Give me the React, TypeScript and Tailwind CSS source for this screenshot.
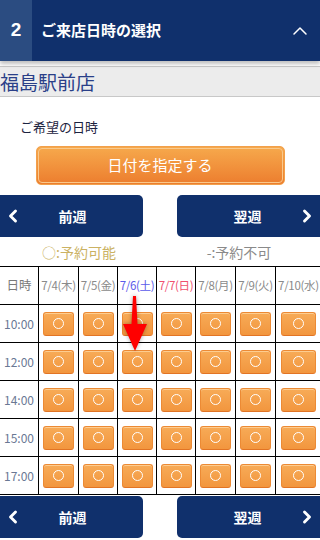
import { ChevronLeft, ChevronRight, ChevronUp } from "lucide-react";

const days = [
  { label: "7/4(木)", color: "text-[#8a8a8a]" },
  { label: "7/5(金)", color: "text-[#8a8a8a]" },
  { label: "7/6(土)", color: "text-[#5b5bea]" },
  { label: "7/7(日)", color: "text-[#f0506e]" },
  { label: "7/8(月)", color: "text-[#8a8a8a]" },
  { label: "7/9(火)", color: "text-[#8a8a8a]" },
  { label: "7/10(水)", color: "text-[#8a8a8a]" },
];

const times = ["10:00", "12:00", "14:00", "15:00", "17:00"];

function Slot({ wide }: { wide?: boolean }) {
  return (
    <button
      className={`${wide ? "w-[35px]" : "w-[31px]"} h-6 flex items-center justify-center rounded-[3px] border border-[#ec8a34] border-b-[#e27424] bg-gradient-to-b from-[#f7ab57] to-[#f2963e] shadow-[inset_0_1px_0_rgba(255,220,170,0.7)]`}
    >
      <span className="w-[11px] h-[11px] rounded-full border-[1.5px] border-white"></span>
    </button>
  );
}

function WeekNav() {
  return (
    <div className="flex justify-between">
      <button className="w-[143px] h-[42px] bg-[#10306c] rounded-r-[5px] text-white flex items-center relative">
        <ChevronLeft size={20} strokeWidth={3.5} className="absolute left-[3px]" />
        <span className="w-full text-center text-[14px] font-bold pl-[2px]">前週</span>
      </button>
      <button className="w-[143px] h-[42px] bg-[#10306c] rounded-l-[5px] text-white flex items-center relative">
        <span className="w-full text-center text-[14px] font-bold pr-[2px]">翌週</span>
        <ChevronRight size={20} strokeWidth={3.5} className="absolute right-[3px]" />
      </button>
    </div>
  );
}

export default function App() {
  return (
    <div className="w-[320px] h-[540px] overflow-hidden bg-white font-['Noto_Sans_CJK_JP','Noto_Sans',sans-serif]">

      {/* STEP HEADER */}
      <div className="h-[61px] flex bg-[#10306c] shadow-[0_3px_4px_rgba(0,0,0,0.25)] relative z-10">
        <div className="w-8 bg-[#2b4c81] flex items-center justify-center text-white text-[19px] font-bold font-['Liberation_Sans',sans-serif]">
          2
        </div>
        <div className="flex-1 flex items-center pl-[9px] text-white text-[15px] font-bold">
          ご来店日時の選択
        </div>
        <div className="w-10 flex items-center justify-center text-white">
          <ChevronUp size={24} strokeWidth={1.5} />
        </div>
      </div>

      {/* STORE NAME */}
      <div className="mt-[5px] h-[31px] bg-[#ececec] border-y border-[#c8c8c8] flex items-center text-[19px] leading-none text-[#2a3f88]">
        福島駅前店
      </div>

      <p className="mt-[21px] pl-5 text-[13px] leading-[18px] text-[#1c2340]">ご希望の日時</p>

      {/* DATE PICKER BUTTON */}
      <div className="mt-[10px] flex justify-center">
        <button className="w-[249px] h-[39px] rounded-[5px] border border-[#f2a04b] bg-gradient-to-b from-[#f6a94c] to-[#ec7d2e] p-px">
          <span className="h-full w-full rounded-[4px] border border-[#f9c98c] flex items-center justify-center text-white text-[15px]">
            日付を指定する
          </span>
        </button>
      </div>

      <div className="mt-[10px]">
        <WeekNav />
      </div>

      {/* LEGEND */}
      <div className="mt-[5px] grid grid-cols-2 text-[14px] leading-[20px]">
        <span className="text-center text-[#cbb263] -ml-[2px]">○:予約可能</span>
        <span className="text-center text-[#8a8a8a] -ml-[2px]">-:予約不可</span>
      </div>

      {/* CALENDAR */}
      <div className="relative mt-[4px] w-[320px] overflow-hidden">
        <div className="w-[322px] grid grid-cols-[39px_40px_39px_39px_39px_40px_40px_46px] border-t border-black">
          <div className="h-[38px] border-r border-b border-black flex items-center justify-center text-[12.5px] text-[#7a7a7a]">
            日時
          </div>
          {days.map((d) => (
            <div
              key={d.label}
              className={`h-[38px] border-r border-b border-black flex items-center justify-center text-[11.5px] tracking-[-0.3px] whitespace-nowrap ${d.color}`}
            >
              {d.label}
            </div>
          ))}
          {times.map((t) => (
            <div key={t} className="contents">
              <div className="h-[38px] border-r border-b border-black flex items-center justify-end pr-[4px] text-[12px] text-[#6a7894]">
                {t}
              </div>
              {days.map((d, i) => (
                <div
                  key={d.label}
                  className="h-[38px] border-r border-b border-black flex items-center justify-center"
                >
                  <Slot wide={i === 6} />
                </div>
              ))}
            </div>
          ))}
        </div>

        {/* RED ARROW */}
        <svg
          className="absolute left-[118px] top-[27px] drop-shadow-[0_0_2px_rgba(0,0,0,0.35)]"
          width="34"
          height="62"
          viewBox="0 0 34 62"
        >
          <path d="M15 3 L18 3 L19.5 31 L29 31 L17 58 L5 31 L13.5 31 Z" fill="#ff0000" />
        </svg>
      </div>

      <div className="mt-px">
        <WeekNav />
      </div>
    </div>
  );
}
